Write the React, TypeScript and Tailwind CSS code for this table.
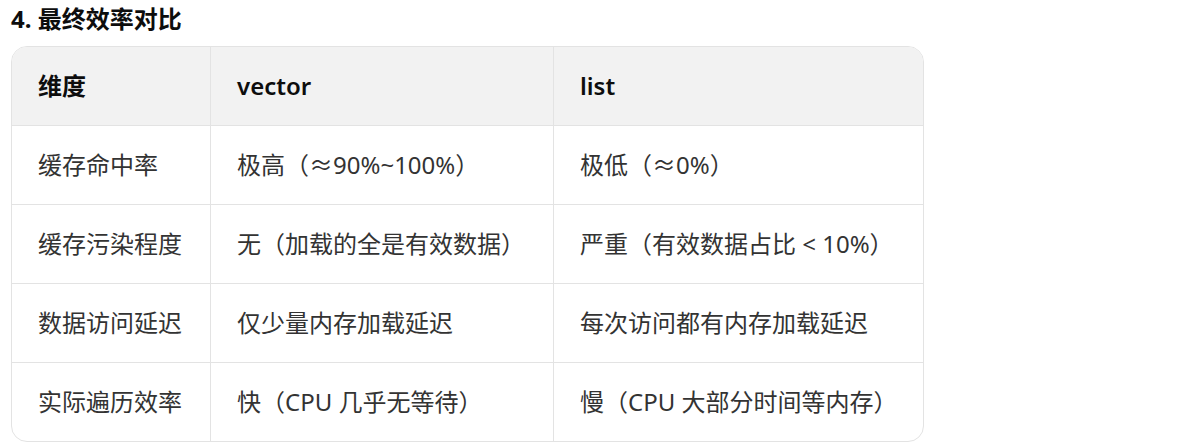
import React from 'react';

const rows: [string, string, string][] = [
  ['缓存命中率', '极高（≈90%~100%）', '极低（≈0%）'],
  ['缓存污染程度', '无（加载的全是有效数据）', '严重（有效数据占比 < 10%）'],
  ['数据访问延迟', '仅少量内存加载延迟', '每次访问都有内存加载延迟'],
  ['实际遍历效率', '快（CPU 几乎无等待）', '慢（CPU 大部分时间等内存）'],
];

const font = { fontFamily: '"Noto Sans", "Noto Sans CJK SC", sans-serif' };

export default function App() {
  return (
    <div className="min-h-screen bg-white pl-[11px] pt-[3px]" style={font}>
      <h4 className="text-[24px] font-bold leading-[32px] text-[#0d0d0d] mb-[11px]">
        4. 最终效率对比
      </h4>

      <div className="w-[913px] overflow-hidden rounded-2xl border border-[#e3e3e3]">
        {/* Header */}
        <div className="grid grid-cols-[198px_343px_370px] h-[78px] bg-[#f2f2f2] text-[24px] font-semibold text-[#0d0d0d]">
          <div className="flex items-center pl-[26px] font-bold">维度</div>
          <div className="flex items-center pl-[26px] border-l border-[#e3e3e3]">vector</div>
          <div className="flex items-center pl-[26px] border-l border-[#e3e3e3]">list</div>
        </div>

        {/* Body */}
        {rows.map(r => (
          <div
            key={r[0]}
            className="grid grid-cols-[198px_343px_370px] h-[79px] border-t border-[#e3e3e3] text-[24px] text-[#333333]"
          >
            <div className="flex items-center pl-[26px]">{r[0]}</div>
            <div className="flex items-center pl-[26px] border-l border-[#e3e3e3]">{r[1]}</div>
            <div className="flex items-center pl-[26px] border-l border-[#e3e3e3]">{r[2]}</div>
          </div>
        ))}
      </div>
    </div>
  );
}
